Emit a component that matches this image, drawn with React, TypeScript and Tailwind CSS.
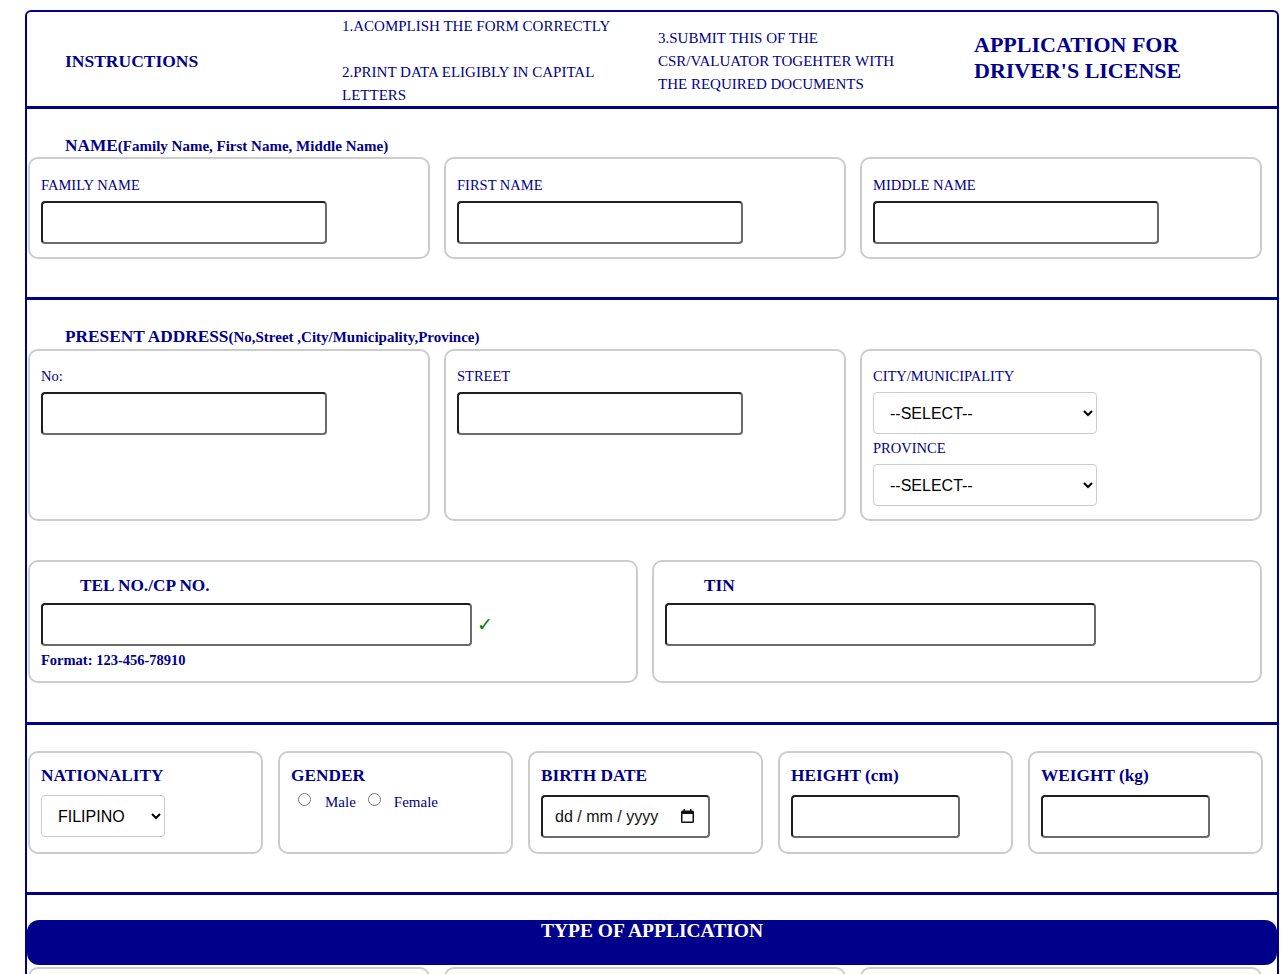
import React from 'react';

const card = 'rounded-[10px] border-2 border-[#ccc] bg-white px-[11px]';
const textInput =
  'h-[43px] rounded-[4px] border-2 border-t-[#1f1f1f] border-l-[#1f1f1f] border-b-[#6b6b6b] border-r-[#6b6b6b] bg-white px-2 text-[16px] outline-none';
const fieldLabel = 'block text-[14.5px] leading-[20px] text-[#00008b]';
const boldLabel = 'block text-[17.3px] font-bold leading-[20px] text-[#00008b]';
const selectBox =
  "h-[42px] rounded-[4px] border border-[#ccc] bg-white pl-[12px] pr-[4px] font-['Liberation_Sans',sans-serif] text-[16px] text-black outline-none";

const CalendarIcon: React.FC = () => (
  <svg width="13" height="14" viewBox="0 0 13 14" fill="#111">
    <path d="M2.5 0h1.5v1.5h5V0h1.5v1.5h1A1.5 1.5 0 0 1 13 3v9.5a1.5 1.5 0 0 1-1.5 1.5h-10A1.5 1.5 0 0 1 0 12.5V3a1.5 1.5 0 0 1 1.5-1.5h1zM1.5 5v7.5h10V5z" />
  </svg>
);

const NameSection: React.FC = () => (
  <section className="border-b-[3px] border-[#00008b] pt-[27px] pb-[38px]">
    <h3 className="pl-[38px] text-[17.3px] font-bold leading-[20px] text-[#00008b]">
      NAME<span className="text-[15px]">(Family Name, First Name, Middle Name)</span>
    </h3>
    <div className="mt-px grid grid-cols-3 gap-[14px] pl-px pr-[15px]">
      {['FAMILY NAME', 'FIRST NAME', 'MIDDLE NAME'].map(label => (
        <div key={label} className={`${card} pt-[16px] pb-[13px]`}>
          <label className={fieldLabel}>{label}</label>
          <input type="text" className={`${textInput} mt-[6px] w-[286px]`} />
        </div>
      ))}
    </div>
  </section>
);

const AddressSection: React.FC = () => (
  <section className="border-b-[3px] border-[#00008b] pt-[27px] pb-[39px]">
    <h3 className="pl-[38px] text-[17.3px] font-bold leading-[20px] text-[#00008b]">
      PRESENT ADDRESS<span className="text-[15px]">(No,Street ,City/Municipality,Province)</span>
    </h3>
    <div className="mt-[2px] grid grid-cols-3 gap-[14px] pl-px pr-[15px]">
      <div className={`${card} pt-[15px] pb-[13px]`}>
        <label className={fieldLabel}>No:</label>
        <input type="text" className={`${textInput} mt-[6px] w-[286px]`} />
      </div>
      <div className={`${card} pt-[15px] pb-[13px]`}>
        <label className={fieldLabel}>STREET</label>
        <input type="text" className={`${textInput} mt-[6px] w-[286px]`} />
      </div>
      <div className={`${card} pt-[15px] pb-[13px]`}>
        <label className={fieldLabel}>CITY/MUNICIPALITY</label>
        <select className={`${selectBox} mt-[6px] block w-[224px]`} defaultValue="">
          <option value="">--SELECT--</option>
          <option value="manila">MANILA</option>
          <option value="quezon">QUEZON CITY</option>
          <option value="cebu">CEBU CITY</option>
        </select>
        <label className={`${fieldLabel} mt-[4px]`}>PROVINCE</label>
        <select className={`${selectBox} mt-[6px] block w-[224px]`} defaultValue="">
          <option value="">--SELECT--</option>
          <option value="ncr">METRO MANILA</option>
          <option value="cebu">CEBU</option>
          <option value="laguna">LAGUNA</option>
        </select>
      </div>
    </div>

    <div className="mt-[39px] grid grid-cols-2 gap-[14px] pl-px pr-[15px]">
      <div className={`${card} pt-[14px] pb-[12px]`}>
        <label className={`${boldLabel} pl-[39px]`}>TEL NO./CP NO.</label>
        <div className="mt-[7px] flex items-center">
          <input type="tel" className={`${textInput} w-[431px]`} />
          <span className="ml-[5px] font-['DejaVu_Sans',sans-serif] text-[19px] font-bold leading-none text-[#008000]">✓</span>
        </div>
        <p className="mt-[5px] text-[14.5px] font-bold leading-[18px] text-[#00008b]">Format: 123-456-78910</p>
      </div>
      <div className={`${card} pt-[14px] pb-[12px]`}>
        <label className={`${boldLabel} pl-[39px]`}>TIN</label>
        <input type="text" className={`${textInput} mt-[7px] w-[431px]`} />
      </div>
    </div>
  </section>
);

const PersonalSection: React.FC = () => (
  <section className="border-b-[3px] border-[#00008b] pt-[26px] pb-[38px]">
    <div className="grid grid-cols-5 gap-[15px] pl-px pr-[14px]">
      <div className={`${card} pt-[13px] pb-[14px]`}>
        <label className={boldLabel}>NATIONALITY</label>
        <select className={`${selectBox} mt-[9px] block h-[41px] w-[124px]`} defaultValue="filipino">
          <option value="filipino">FILIPINO</option>
          <option value="other">OTHER</option>
        </select>
      </div>
      <div className={`${card} pt-[13px] pb-[14px]`}>
        <label className={boldLabel}>GENDER</label>
        <div className="mt-[6px] flex items-start text-[15px] leading-[18px] text-[#00008b]">
          <input type="radio" name="gender" id="male" className="mt-px ml-[7px] h-[13px] w-[13px]" />
          <label htmlFor="male" className="ml-[14px] mt-px">Male</label>
          <input type="radio" name="gender" id="female" className="mt-px ml-[12px] h-[13px] w-[13px]" />
          <label htmlFor="female" className="ml-[13px] mt-px">Female</label>
        </div>
      </div>
      <div className={`${card} pt-[13px] pb-[14px]`}>
        <label className={boldLabel}>BIRTH DATE</label>
        <div className="relative mt-[9px] w-[169px]">
          <input
            type="text"
            placeholder="dd / mm / yyyy"
            className={`${textInput} h-[42px] w-[169px] pl-[12px] font-['Liberation_Sans',sans-serif] text-[15.5px] placeholder:text-[#111]`}
          />
          <span className="pointer-events-none absolute right-[16px] top-[14px]">
            <CalendarIcon />
          </span>
        </div>
      </div>
      <div className={`${card} pt-[13px] pb-[14px]`}>
        <label className={boldLabel}>HEIGHT (cm)</label>
        <input type="text" className={`${textInput} mt-[9px] h-[42px] w-[169px]`} />
      </div>
      <div className={`${card} pt-[13px] pb-[14px]`}>
        <label className={boldLabel}>WEIGHT (kg)</label>
        <input type="text" className={`${textInput} mt-[9px] h-[42px] w-[169px]`} />
      </div>
    </div>
  </section>
);

const ApplicationTypeSection: React.FC = () => (
  <section className="pt-[25px] pb-[30px]">
    <div className="rounded-[12px] bg-[#00008b] pb-[23px] text-center text-[19.5px] font-bold leading-[22px] text-white">
      TYPE OF APPLICATION
    </div>
    <div className="mt-[2px] grid grid-cols-3 gap-[14px] pl-px pr-[15px]">
      {['student', 'nonpro', 'pro'].map(type => (
        <div key={type} className={`${card} h-[102px]`} />
      ))}
    </div>
  </section>
);

export default function App() {
  return (
    <div className="min-h-screen bg-white pt-[10px] font-['Liberation_Serif',serif]">
      <div className="ml-[25px] w-[1254px] rounded-t-[6px] border-2 border-b-0 border-[#00008b]">
        {/* Header */}
        <div className="flex h-[97px] items-center border-b-[3px] border-[#00008b] pt-[4px] text-[#00008b]">
          <div className="w-[315px] pl-[38px] text-[17.5px] font-bold">INSTRUCTIONS</div>
          <div className="w-[316px] text-[15px] leading-[23px]">
            <p>1.ACOMPLISH THE FORM CORRECTLY</p>
            <p className="mt-[23px]">
              2.PRINT DATA ELIGIBLY IN CAPITAL
              <br />
              LETTERS
            </p>
          </div>
          <div className="w-[316px] text-[15px] leading-[23px]">
            <p>
              3.SUBMIT THIS OF THE
              <br />
              CSR/VALUATOR TOGEHTER WITH
              <br />
              THE REQUIRED DOCUMENTS
            </p>
          </div>
          <h1 className="mb-[6px] flex-1 text-[22px] font-bold leading-[26px]">
            APPLICATION FOR
            <br />
            DRIVER'S LICENSE
          </h1>
        </div>

        <NameSection />
        <AddressSection />
        <PersonalSection />
        <ApplicationTypeSection />
      </div>
    </div>
  );
}
